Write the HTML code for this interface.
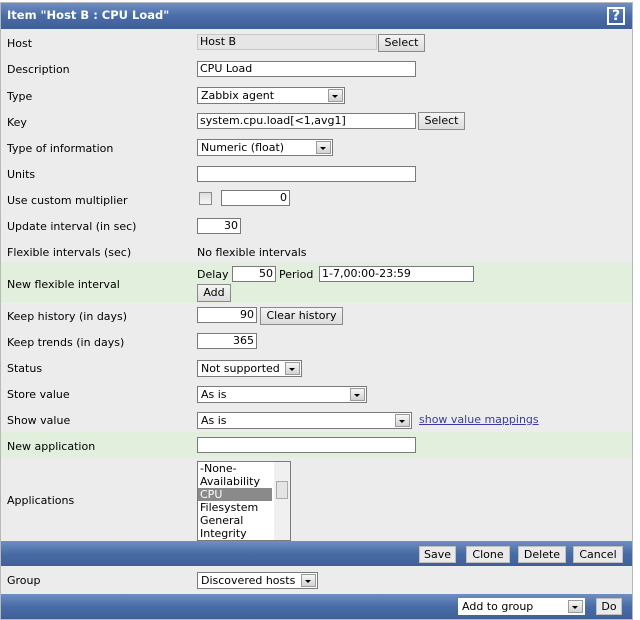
<!DOCTYPE html>
<html><head><meta charset="utf-8"><style>
*{box-sizing:border-box}
body{margin:0;width:640px;height:620px;background:#fff;font:11px "DejaVu Sans",sans-serif;color:#000;position:relative;overflow:hidden}
#wrap{position:absolute;left:0;top:2px;width:633px;height:618px;background:#ececec;border:1px solid #b8b8b8}
.bar{position:absolute;left:0;width:631px;background:linear-gradient(#6d8fc2,#4a6ca6 50%,#3f5f99);}
.row{position:absolute;left:0;width:631px}
.g{background:#e2efdc}
.l{position:absolute;left:6px}
.x{position:absolute;white-space:nowrap}
.i{position:absolute;height:16px;background:#fff;border:1px solid #7a7a7a;padding:0 2px;line-height:14px;white-space:nowrap;overflow:hidden}
.b{position:absolute;height:18px;background:linear-gradient(#f4f4f4,#dcdcdc);border:1px solid #8a8a8a;line-height:16px;text-align:center}
.s{position:absolute;height:17px;background:#fff;border:1px solid #7a7a7a;padding:0 3px;line-height:15px}
.s:after{content:"";position:absolute;right:1px;top:1px;width:15px;height:13px;background:linear-gradient(#f6f6f6,#d2d2d2);border:1px solid #9a9a9a;box-sizing:border-box}
.s:before{content:"";position:absolute;right:6px;top:7px;border:3px solid transparent;border-top:3px solid #000;z-index:2}
.bb{position:absolute;height:17px;background:#eaeaea;border:1px solid #c0c0c0;line-height:15px;text-align:center}
</style></head><body><div id="wrap">
<div class="bar" style="top:0;height:26px"></div>
<div class="x" style="left:6px;top:5px;color:#fff;font-weight:bold;font-size:11.5px">Item "Host B : CPU Load"</div>
<div class="x" style="left:606px;top:4px;width:18px;height:18px;border:2px solid #fff;color:#fff;font-weight:bold;font-size:14px;text-align:center;line-height:14px">?</div>

<div class="l" style="top:34px">Host</div>
<div class="i" style="left:196px;top:31px;width:180px;background:#e6e6e6;border-color:#c8c8c8">Host B</div>
<div class="b" style="left:377px;top:31px;width:47px">Select</div>

<div class="l" style="top:60px">Description</div>
<div class="i" style="left:196px;top:58px;width:219px">CPU Load</div>

<div class="l" style="top:87px">Type</div>
<div class="s" style="left:196px;top:84px;width:148px">Zabbix agent</div>

<div class="l" style="top:113px">Key</div>
<div class="i" style="left:196px;top:110px;width:219px">system.cpu.load[&lt;1,avg1]</div>
<div class="b" style="left:417px;top:109px;width:47px">Select</div>

<div class="l" style="top:139px">Type of information</div>
<div class="s" style="left:196px;top:136px;width:136px">Numeric (float)</div>

<div class="l" style="top:165px">Units</div>
<div class="i" style="left:196px;top:163px;width:219px"></div>

<div class="l" style="top:191px">Use custom multiplier</div>
<div class="x" style="left:198px;top:189px;width:13px;height:13px;border:1px solid #8a8a8a;background:linear-gradient(#ddd,#f8f8f8)"></div>
<div class="i" style="left:220px;top:187px;width:69px;text-align:right">0</div>

<div class="l" style="top:217px">Update interval (in sec)</div>
<div class="i" style="left:196px;top:215px;width:44px;text-align:right">30</div>

<div class="l" style="top:243px">Flexible intervals (sec)</div>
<div class="x" style="left:196px;top:243px">No flexible intervals</div>

<div class="row g" style="top:260px;height:40px"></div>
<div class="l" style="top:275px">New flexible interval</div>
<div class="x" style="left:196px;top:265px">Delay</div>
<div class="i" style="left:231px;top:263px;width:44px;text-align:right">50</div>
<div class="x" style="left:278px;top:265px">Period</div>
<div class="i" style="left:318px;top:263px;width:155px">1-7,00:00-23:59</div>
<div class="b" style="left:196px;top:281px;width:34px">Add</div>

<div class="l" style="top:307px">Keep history (in days)</div>
<div class="i" style="left:196px;top:304px;width:60px;text-align:right">90</div>
<div class="b" style="left:259px;top:304px;width:83px">Clear history</div>

<div class="l" style="top:333px">Keep trends (in days)</div>
<div class="i" style="left:196px;top:330px;width:60px;text-align:right">365</div>

<div class="l" style="top:359px">Status</div>
<div class="s" style="left:196px;top:357px;width:105px">Not supported</div>

<div class="l" style="top:385px">Store value</div>
<div class="s" style="left:196px;top:383px;width:170px">As is</div>

<div class="l" style="top:411px">Show value</div>
<div class="s" style="left:196px;top:409px;width:215px">As is</div>
<div class="x" style="left:418px;top:410px;color:#3a3aa0;text-decoration:underline">show value mappings</div>

<div class="row g" style="top:429px;height:26px"></div>
<div class="l" style="top:437px">New application</div>
<div class="i" style="left:196px;top:434px;width:219px"></div>

<div class="l" style="top:491px">Applications</div>
<div class="x" style="left:196px;top:458px;width:94px;height:80px;background:#fff;border:1px solid #7a7a7a;overflow:hidden;line-height:13px">
<div style="padding-left:2px">-None-</div><div style="padding-left:2px">Availability</div><div style="padding-left:2px;background:#8a8a8a;color:#fff;width:74px">CPU</div><div style="padding-left:2px">Filesystem</div><div style="padding-left:2px">General</div><div style="padding-left:2px">Integrity</div>
<div style="position:absolute;right:0;top:0;width:16px;height:78px;background:#f0f0f0"></div>
<div style="position:absolute;right:2px;top:19px;width:12px;height:18px;background:#e4e4e4;border:1px solid #aaa"></div>
</div>

<div class="bar" style="top:538px;height:25px"></div>
<div class="bb" style="left:418px;top:543px;width:37px">Save</div>
<div class="bb" style="left:465px;top:543px;width:44px">Clone</div>
<div class="bb" style="left:517px;top:543px;width:48px">Delete</div>
<div class="bb" style="left:572px;top:543px;width:50px">Cancel</div>

<div class="l" style="top:571px">Group</div>
<div class="s" style="left:196px;top:569px;width:121px">Discovered hosts</div>

<div class="bar" style="top:591px;height:25px"></div>
<div class="s" style="left:457px;top:595px;width:127px;border-color:#fff">Add to group</div>
<div class="bb" style="left:595px;top:595px;width:26px">Do</div>
</div></body></html>
